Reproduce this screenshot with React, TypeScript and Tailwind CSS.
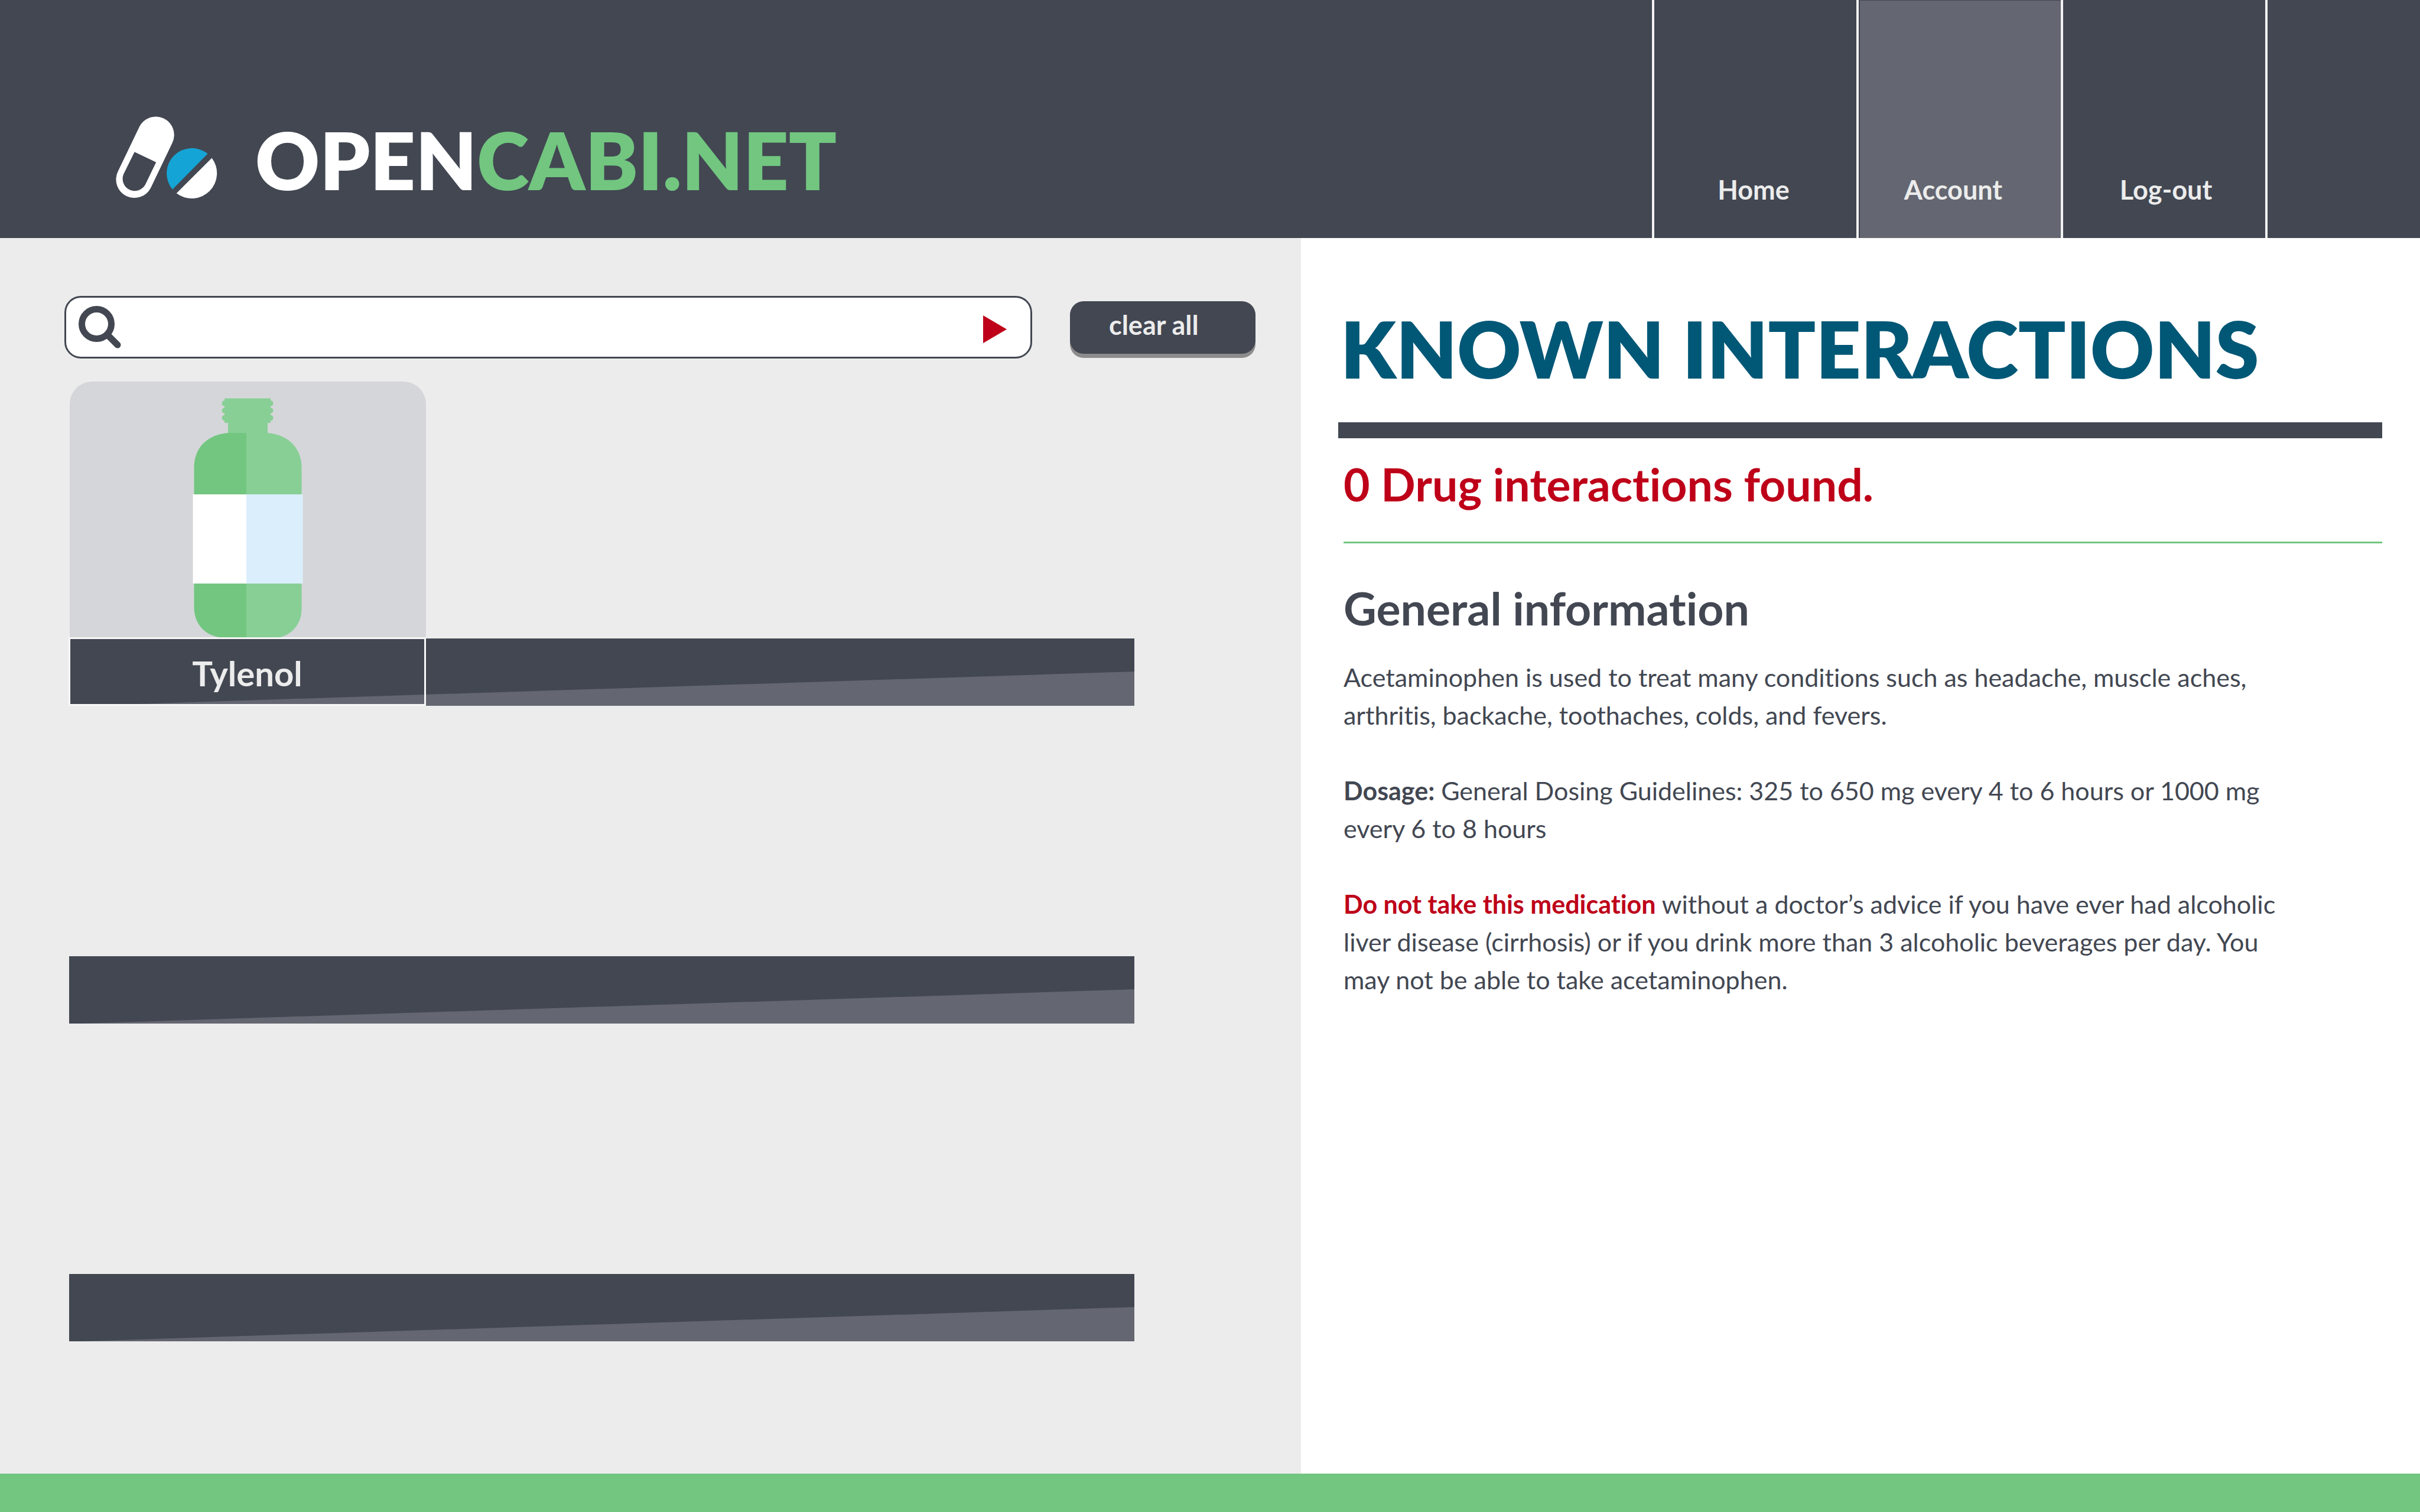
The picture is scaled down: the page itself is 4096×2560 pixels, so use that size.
import type { ReactNode } from "react";

function PillsLogo() {
  return (
    <svg aria-hidden="true" viewBox="105 80 673 548" className="mt-1.5 h-[140px] w-[172px] shrink-0">
      <line x1="370" y1="203" x2="228" y2="499" stroke="#fff" strokeWidth="243" strokeLinecap="round" />
      <path d="M229 316 L372 384 L300 533 A80 80 0 0 1 156 464 Z" fill="#424752" />
      <path d="M480 564 A167 167 0 0 1 714 328 Z" fill="#14a4d5" />
      <path d="M741 356 A167 167 0 0 1 507 590 Z" fill="#fff" />
    </svg>
  );
}

function SearchIcon() {
  return (
    <svg aria-hidden="true" viewBox="0 0 72 72" className="size-[72px] shrink-0" fill="none" stroke="#424752">
      <circle cx="30.5" cy="30.5" r="25" strokeWidth="11" />
      <path d="M50 50 L66 66" strokeWidth="11" strokeLinecap="round" />
    </svg>
  );
}

function Bottle() {
  return (
    <svg aria-hidden="true" viewBox="326 674 187 405" className="mx-auto block h-[405px] w-[187px]">
      <g fill="#88cf95">
        <rect x="380" y="674.5" width="78" height="41.5" />
        <rect x="375.5" y="678" width="87" height="9.6" rx="4.8" />
        <rect x="375.5" y="690.4" width="87" height="9.6" rx="4.8" />
        <rect x="375.5" y="702.7" width="87" height="9.6" rx="4.8" />
        <rect x="386" y="716" width="67" height="18" />
        <path d="M417 733 H453 C481 735 510.500 753 510.500 792 V1031 C510.500 1057 493 1075 473 1079 H417 Z" />
      </g>
      <path d="M417 733 H386 C358 735 328.500 752 328.500 792 V1028 C328.500 1057 347 1075 371 1079 H417 Z" fill="#72c680" />
      <rect x="326.500" y="837" width="91" height="151" fill="#fff" />
      <rect x="417" y="837" width="95.500" height="151" fill="#dbeefc" />
    </svg>
  );
}

function Shelf({ children }: { children?: ReactNode }) {
  return (
    <li className="grid min-h-[538px]">
      <svg
        aria-hidden="true"
        viewBox="0 0 1803 114"
        preserveAspectRatio="none"
        className="col-start-1 row-start-1 ml-px block h-[114px] w-[1803px] self-end"
      >
        <rect width="1803" height="114" fill="#424752" />
        <path d="M20 114 L1803 56 V114 Z" fill="#646771" />
      </svg>
      <div className="col-start-1 row-start-1 flex items-end">{children}</div>
    </li>
  );
}

function Product({ name }: { name: string }) {
  return (
    <article className="w-[605px]">
      <div className="ml-0.5 rounded-t-[38px] bg-[#d5d6da] pt-7">
        <Bottle />
      </div>
      <h3 className="border-3 border-[#f7f7f7] pt-[23px] pb-[17px] text-center text-[58px] leading-[70px] font-bold text-[#ececec]">
        {name}
      </h3>
    </article>
  );
}

const navLinks = [
  { label: "Home", panel: "pr-2" },
  { label: "Account", panel: "bg-[#646771] pr-6" },
  { label: "Log-out", panel: "pl-1" },
];

export default function App() {
  return (
    <div className="flex min-h-screen flex-col bg-white font-['Lato',sans-serif] text-[#424752] [font-variant-ligatures:none]">
      <header className="flex items-stretch justify-between bg-[#424752]">
        <a href="#home" className="flex items-start gap-16 pt-[191px] pb-13 pl-[196px]">
          <PillsLogo />
          <span className="text-[134px] leading-[160px] font-extrabold text-white">
            OPEN<span className="text-[#72c680]">CABI.NET</span>
          </span>
        </a>
        <nav className="flex text-[45px] leading-[56px] font-bold text-[#ececec]">
          {navLinks.map((link) => (
            <a
              key={link.label}
              href={"#" + link.label.toLowerCase()}
              className="flex w-[346px] border-l-4 border-[#f2f2f2] pt-px pl-0.5"
            >
              <span className={"flex flex-1 items-end justify-center pb-[54px] " + link.panel}>{link.label}</span>
            </a>
          ))}
          <div className="w-[262px] border-l-4 border-[#f2f2f2]" />
        </nav>
      </header>

      <main className="flex flex-1">
        <section aria-label="Medicine cabinet" className="w-[53.76%] bg-[#ececec] pt-[98px] pb-20">
          <form className="flex items-center gap-16 pr-[77px] pl-[109px]">
            <div className="flex flex-1 items-center rounded-[28px] border-3 border-[#424752] bg-white py-[14px] pr-10 pl-[21px]">
              <label htmlFor="drug-search">
                <SearchIcon />
              </label>
              <input
                id="drug-search"
                type="text"
                aria-label="Search for a drug"
                className="mx-6 min-w-0 flex-1 bg-transparent text-[45px] leading-[56px] outline-none"
              />
              <button type="submit" aria-label="Search" className="mt-1.5">
                <svg aria-hidden="true" viewBox="0 0 40 47" className="block h-[47px] w-10">
                  <path d="M0 0 L40 23.500 L0 47 Z" fill="#be0019" />
                </svg>
              </button>
            </div>
            <button
              type="button"
              className="w-[314px] rounded-[23px] bg-[#424752] pt-3 pb-[21px] pl-[66px] text-left text-[45px] leading-[56px] font-bold text-[#ececec] shadow-[0_7px_0_#8c8c8c]"
            >
              clear all
            </button>
          </form>

          <ul className="mt-[39px] pl-[116px]">
            <Shelf>
              <Product name="Tylenol" />
            </Shelf>
            <Shelf />
            <Shelf />
          </ul>
        </section>

        <section aria-label="Interactions" className="flex-1 pt-[107px] pr-16 pb-20 pl-[63px]">
          <h1 className="pl-1 text-[133px] leading-[160px] font-extrabold whitespace-nowrap text-[#005776]">
            KNOWN INTERACTIONS
          </h1>
          <div className="mt-[45px] h-[27px] bg-[#424752]" />
          <div className="pl-[9px]">
            <p className="mt-[31px] text-[77px] leading-[92px] font-bold text-[#be0019]">0 Drug interactions found.</p>
            <hr className="mt-13 border-t-3 border-[#72c680]" />
            <h2 className="mt-[63px] text-[77px] leading-[92px] font-bold">General information</h2>
            <div className="mt-10 flex max-w-[1610px] flex-col gap-16 text-[43px] leading-[64px]">
              <p>
                Acetaminophen is used to treat many conditions such as headache, muscle aches, arthritis, backache,
                toothaches, colds, and fevers.
              </p>
              <p>
                <strong className="font-bold">Dosage:</strong> General Dosing Guidelines: 325 to 650 mg every 4 to 6
                hours or 1000 mg every 6 to 8 hours
              </p>
              <p>
                <strong className="font-bold text-[#be0019]">Do not take this medication</strong> without a doctor’s
                advice if you have ever had alcoholic liver disease (cirrhosis) or if you drink more than 3 alcoholic
                beverages per day. You may not be able to take acetaminophen.
              </p>
            </div>
          </div>
        </section>
      </main>

      <footer className="h-[65px] bg-[#72c680]" />
    </div>
  );
}
